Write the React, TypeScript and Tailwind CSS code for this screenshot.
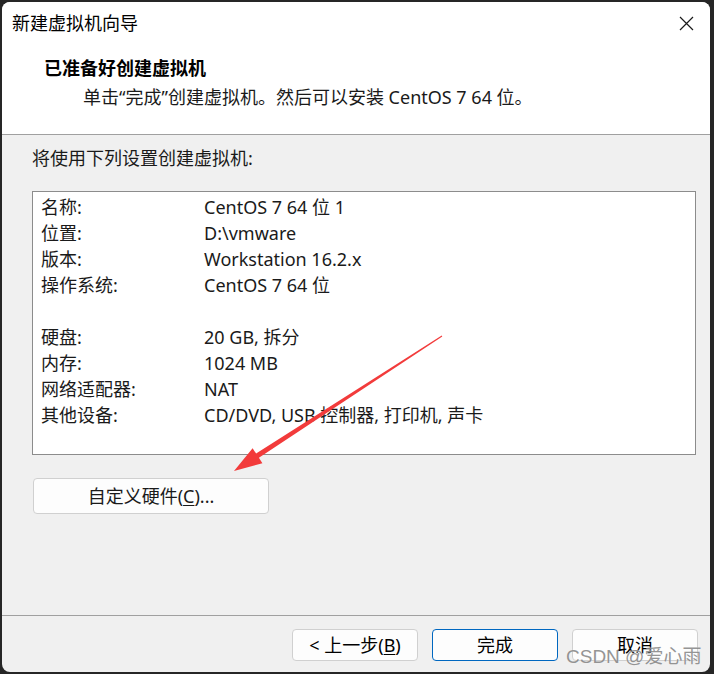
import React from "react";

const font = { fontFamily: '"Noto Sans", "Noto Sans CJK SC", sans-serif' };

function Row({ label, value }: { label: string; value: string }) {
  return (
    <div className="flex h-[26px] items-center">
      <div className="w-[163px] shrink-0">{label}</div>
      <div>{value}</div>
    </div>
  );
}

export default function App() {
  return (
    <div
      className="relative w-[714px] h-[674px] bg-[#262626] pt-[2px] pl-[2px] pr-[4px] pb-[2px] text-[18px] text-black overflow-hidden"
      style={font}
    >
      <div className="flex h-full flex-col overflow-hidden rounded-[8px] bg-[#f0f0f0]">
        {/* header */}
        <div className="bg-white pt-[9px] pb-[25px] border-b border-[#a0a0a0]">
          <div className="flex h-[24px] items-center justify-between pl-[10px] pr-[16px] leading-[24px]">
            <span>新建虚拟机向导</span>
            <svg width="15" height="15" viewBox="0 0 15 15">
              <path d="M1 1L14 14M14 1L1 14" stroke="#1a1a1a" strokeWidth="1.2" fill="none" />
            </svg>
          </div>
          <div className="mt-[21px] pl-[42px] h-[24px] leading-[24px] font-bold">已准备好创建虚拟机</div>
          <div className="mt-[5px] pl-[81px] h-[24px] leading-[24px] text-[#1a1a1a]">
            单击“完成”创建虚拟机。然后可以安装 CentOS 7 64 位。
          </div>
        </div>

        {/* body */}
        <div className="flex flex-1 flex-col">
          <div className="mt-[11px] ml-[30px] h-[24px] leading-[24px] text-[#1a1a1a]">将使用下列设置创建虚拟机:</div>
          <div className="mt-[21px] ml-[30px] w-[664px] h-[264px] border border-[#8c8c8c] bg-white pt-[2px] pl-[8px] text-[#1a1a1a]">
            <Row label="名称:" value="CentOS 7 64 位 1" />
            <Row label="位置:" value="D:\vmware" />
            <Row label="版本:" value="Workstation 16.2.x" />
            <Row label="操作系统:" value="CentOS 7 64 位" />
            <div className="h-[26px]" />
            <Row label="硬盘:" value="20 GB, 拆分" />
            <Row label="内存:" value="1024 MB" />
            <Row label="网络适配器:" value="NAT" />
            <Row label="其他设备:" value="CD/DVD, USB 控制器, 打印机, 声卡" />
          </div>
          <div className="mt-[23px] ml-[31px] flex h-[36px] w-[236px] items-center justify-center rounded-[4px] border border-[#d0d0d0] bg-[#fdfdfd] text-[#1a1a1a]">
            <span>
              自定义硬件(<span className="underline underline-offset-2">C</span>)...
            </span>
          </div>
          <div className="flex-1" />
          <div className="flex justify-end gap-[14px] border-t border-[#a0a0a0] pt-[13px] pb-[11px] pr-[12px]">
            <div className="flex h-[32px] w-[126px] items-center justify-center rounded-[4px] border border-[#d0d0d0] bg-[#fdfdfd]">
              <span>
                &lt; 上一步(<span className="underline underline-offset-2">B</span>)
              </span>
            </div>
            <div className="flex h-[32px] w-[126px] items-center justify-center rounded-[4px] border border-[#0067c0] bg-[#fdfdfd]">
              完成
            </div>
            <div className="flex h-[32px] w-[126px] items-center justify-center rounded-[4px] border border-[#d0d0d0] bg-[#fdfdfd]">
              取消
            </div>
          </div>
        </div>
      </div>

      {/* red arrow annotation */}
      <svg className="absolute left-0 top-0 pointer-events-none" width="714" height="674" viewBox="0 0 714 674">
        <polygon
          points="442.3,336.4 441.7,335.6 256.1,453.6 252.6,448.2 234,471 262.4,463.2 258.9,457.8"
          fill="#f23b3b"
        />
      </svg>

      {/* watermark */}
      <div
        className="absolute left-[566px] top-[645px] text-[19px] leading-[24px] text-[#8a8a8a] opacity-90 pointer-events-none"
        style={{ fontFamily: '"Liberation Sans", "Noto Sans CJK SC", sans-serif', textShadow: "0 0 1px #ffffff" }}
      >
        CSDN @爱心雨
      </div>
    </div>
  );
}
